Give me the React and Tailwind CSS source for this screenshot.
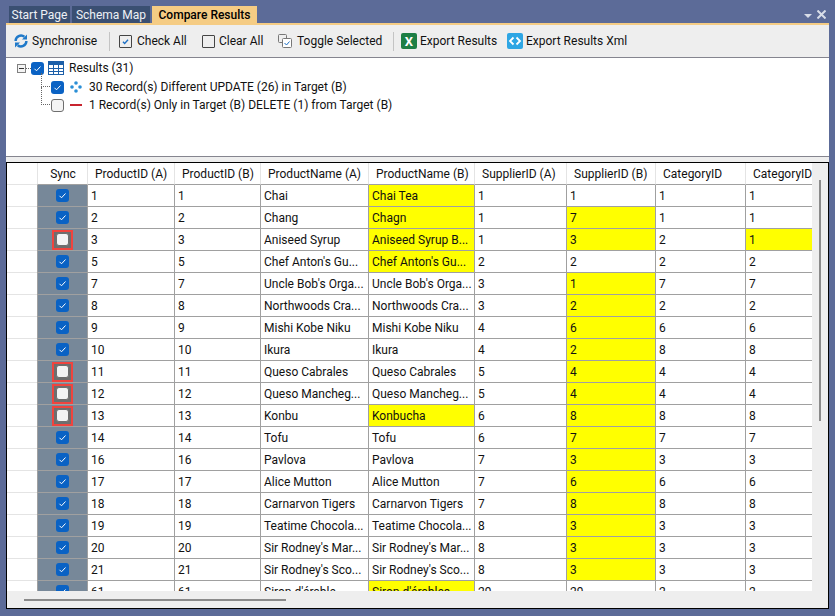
import React from 'react'

const columns = [
  { label: 'ProductID (A)', width: 'w-[87px]' },
  { label: 'ProductID (B)', width: 'w-[86px]' },
  { label: 'ProductName (A)', width: 'w-[108px]' },
  { label: 'ProductName (B)', width: 'w-[106px]' },
  { label: 'SupplierID (A)', width: 'w-[92px]' },
  { label: 'SupplierID (B)', width: 'w-[89px]' },
  { label: 'CategoryID', width: 'w-[90px]' },
  { label: 'CategoryID', width: 'w-[90px]' },
]

// each row: checked, values, indexes of the cells marked yellow
const rows = [
  [true, ['1', '1', 'Chai', 'Chai Tea', '1', '1', '1', '1'], [3]],
  [true, ['2', '2', 'Chang', 'Chagn', '1', '7', '1', '1'], [3, 5]],
  [false, ['3', '3', 'Aniseed Syrup', 'Aniseed Syrup B...', '1', '3', '2', '1'], [3, 5, 7]],
  [true, ['5', '5', "Chef Anton's Gu...", "Chef Anton's Gu...", '2', '2', '2', '2'], [3]],
  [true, ['7', '7', "Uncle Bob's Orga...", "Uncle Bob's Orga...", '3', '1', '7', '7'], [5]],
  [true, ['8', '8', 'Northwoods Cra...', 'Northwoods Cra...', '3', '2', '2', '2'], [5]],
  [true, ['9', '9', 'Mishi Kobe Niku', 'Mishi Kobe Niku', '4', '6', '6', '6'], [5]],
  [true, ['10', '10', 'Ikura', 'Ikura', '4', '2', '8', '8'], [5]],
  [false, ['11', '11', 'Queso Cabrales', 'Queso Cabrales', '5', '4', '4', '4'], [5]],
  [false, ['12', '12', 'Queso Mancheg...', 'Queso Mancheg...', '5', '4', '4', '4'], [5]],
  [false, ['13', '13', 'Konbu', 'Konbucha', '6', '8', '8', '8'], [3, 5]],
  [true, ['14', '14', 'Tofu', 'Tofu', '6', '7', '7', '7'], [5]],
  [true, ['16', '16', 'Pavlova', 'Pavlova', '7', '3', '3', '3'], [5]],
  [true, ['17', '17', 'Alice Mutton', 'Alice Mutton', '7', '6', '6', '6'], [5]],
  [true, ['18', '18', 'Carnarvon Tigers', 'Carnarvon Tigers', '7', '8', '8', '8'], [5]],
  [true, ['19', '19', 'Teatime Chocola...', 'Teatime Chocola...', '8', '3', '3', '3'], [5]],
  [true, ['20', '20', "Sir Rodney's Mar...", "Sir Rodney's Mar...", '8', '3', '3', '3'], [5]],
  [true, ['21', '21', "Sir Rodney's Sco...", "Sir Rodney's Sco...", '8', '3', '3', '3'], [5]],
  [true, ['61', '61', "Sirop d'érable", "Sirop d'érables", '29', '29', '2', '2'], [3]],
]

const Tick = ({ className, width = 1 }) => (
  <svg viewBox="0 0 13 13" className={className} fill="none" stroke="currentColor" strokeWidth={width}>
    <path d="M3.5 6.8 5.5 8.8 9.5 4.5" />
  </svg>
)

const BlueCheck = ({ checked }) =>
  checked ? (
    <span className="flex h-[13px] w-[13px] items-center justify-center rounded-[3px] bg-[#0a62c4] text-white">
      <Tick className="h-[13px] w-[13px]" />
    </span>
  ) : (
    <span className="block h-[13px] w-[13px] rounded-[3px] border border-[#6e6e6e] bg-[#f4f4f4]" />
  )

const ToolbarCheck = ({ checked }) => (
  <span className="flex h-[13px] w-[13px] items-center justify-center rounded-[1px] border border-[#444] text-[#1c6fc4]">
    {checked && <Tick className="h-[13px] w-[13px]" width={1.6} />}
  </span>
)

const SyncIcon = () => (
  <svg viewBox="0 0 14 14" className="h-[14px] w-[14px]" fill="none" stroke="#1f79c9" strokeWidth="2.4">
    <path d="M1.6 7a5.4 5.4 0 0 1 8.8-4.2" />
    <path d="M12.4 7a5.4 5.4 0 0 1-8.8 4.2" />
    <path d="M13 0.5v5H8z" fill="#1f79c9" strokeWidth="0" />
    <path d="M1 13.5v-5h5z" fill="#1f79c9" strokeWidth="0" />
  </svg>
)

const ToggleIcon = () => (
  <svg viewBox="0 0 14 14" className="h-[14px] w-[14px]" fill="none">
    <rect x="0.5" y="0.5" width="8" height="8" rx="1" fill="#eee" stroke="#777" />
    <rect x="4.5" y="4.5" width="9" height="9" rx="1" fill="#fff" stroke="#777" />
    <path d="M6.5 9 8.5 11l3-3.5" stroke="#1c6fc4" />
  </svg>
)

const ExcelIcon = () => (
  <span className="flex h-[16px] w-[16px] items-center justify-center rounded-[2px] bg-[#1d7f45] text-[13px] font-bold leading-none text-white">
    X
  </span>
)

const XmlIcon = () => (
  <span className="flex h-[16px] w-[16px] items-center justify-center rounded-[2px] bg-[#2ea6e4] text-white">
    <svg viewBox="0 0 16 16" className="h-[16px] w-[16px]" fill="none" stroke="currentColor" strokeWidth="1.8">
      <path d="M6.5 4.5 3 8l3.5 3.5" />
      <path d="M9.5 4.5 13 8l-3.5 3.5" />
    </svg>
  </span>
)

const TableIcon = () => (
  <svg viewBox="0 0 16 14" className="h-[14px] w-[16px]" fill="none">
    <rect x="0.5" y="0.5" width="15" height="13" fill="#fff" stroke="#1c5fa8" />
    <rect x="0.5" y="0.5" width="15" height="3.5" fill="#1c5fa8" />
    <path d="M0 7.5h16M0 10.5h16M5.5 4v10M10.5 4v10" stroke="#1c5fa8" />
  </svg>
)

const DiffIcon = () => (
  <svg viewBox="0 0 12 12" className="h-[12px] w-[12px]" fill="#2a8fd6">
    <circle cx="6" cy="2" r="1.8" />
    <circle cx="2" cy="6" r="1.8" />
    <circle cx="10" cy="6" r="1.8" />
    <circle cx="6" cy="10" r="1.8" />
  </svg>
)

const ToolButton = ({ icon, label, gap = 'gap-[4px]', className = '' }) => (
  <div className={`flex items-center ${gap} ${className}`}>
    {icon}
    <span>{label}</span>
  </div>
)

const App = () => {
  return (
    <div className="flex h-[616px] w-[835px] flex-col overflow-hidden bg-[#5c6b98] pl-[6px] pr-[6px] pt-[6px] pb-[7px] font-['Roboto',sans-serif] text-[12px] leading-[16px] text-[#111]">
      {/* Tabs */}
      <div className="flex h-[17px] items-stretch pl-[3px]">
        <div className="flex w-[61px] items-center justify-center bg-[#3a4f72] text-[#eef1f6]">Start Page</div>
        <div className="ml-[2px] flex w-[78px] items-center justify-center bg-[#3a4f72] text-[#eef1f6]">Schema Map</div>
        <div className="ml-[2px] flex w-[105px] items-center justify-center bg-[#f5cc84] font-medium text-black">Compare Results</div>
        <div className="ml-auto flex items-center gap-[5px] pr-[3px] text-[#d8dde8]">
          <span className="mt-[3px] h-0 w-0 border-x-[4px] border-t-[4px] border-x-transparent border-t-[#d8dde8]" />
          <svg viewBox="0 0 9 9" className="h-[9px] w-[9px]" stroke="currentColor" strokeWidth="2">
            <path d="M0.5 0.5 8.5 8.5M8.5 0.5 0.5 8.5" />
          </svg>
        </div>
      </div>
      <div className="h-[2px] bg-[#f5cc84]" />

      {/* Toolbar */}
      <div className="flex h-[33px] items-center border-b border-[#85858f] bg-[#eeeeee] pl-[8px]">
        <ToolButton icon={<SyncIcon />} label="Synchronise" className="w-[95px]" />
        <span className="h-[19px] w-px bg-[#c4c4c4]" />
        <ToolButton icon={<ToolbarCheck checked />} label="Check All" gap="gap-[5px]" className="ml-[9px] w-[83px]" />
        <ToolButton icon={<ToolbarCheck />} label="Clear All" className="w-[76px]" />
        <ToolButton icon={<ToggleIcon />} label="Toggle Selected" gap="gap-[5px]" className="w-[115px]" />
        <span className="h-[19px] w-px bg-[#c4c4c4]" />
        <ToolButton icon={<ExcelIcon />} label="Export Results" gap="gap-[3px]" className="ml-[7px] w-[106px]" />
        <ToolButton icon={<XmlIcon />} label="Export Results Xml" gap="gap-[3px]" />
      </div>

      {/* Results tree */}
      <div className="h-[98px] bg-white pl-[11px] pt-[1px]">
        <div className="flex h-[18px] items-center">
          <span className="flex h-[9px] w-[9px] items-center justify-center border border-[#808080] bg-[#f4f4f4]">
            <span className="h-px w-[5px] bg-[#333]" />
          </span>
          <span className="w-[5px] border-t border-dotted border-[#666]" />
          <BlueCheck checked />
          <span className="ml-[4px]"><TableIcon /></span>
          <span className="ml-[5px]">Results (31)</span>
        </div>
        <div className="relative ml-[34px] mt-[1px] flex h-[18px] items-center">
          <span className="absolute left-[-10px] top-[-5px] h-[14px] w-[9px] border-b border-l border-dotted border-[#666]" />
          <BlueCheck checked />
          <span className="ml-[6px]"><DiffIcon /></span>
          <span className="ml-[7px]">30 Record(s) Different UPDATE (26) in Target (B)</span>
        </div>
        <div className="relative ml-[34px] flex h-[18px] items-center">
          <span className="absolute left-[-10px] top-[-9px] h-[18px] w-[9px] border-b border-l border-dotted border-[#666]" />
          <BlueCheck />
          <span className="ml-[6px] h-[2px] w-[12px] bg-[#c8242f]" />
          <span className="ml-[7px]">1 Record(s) Only in Target (B) DELETE (1) from Target (B)</span>
        </div>
      </div>

      <div className="h-[6px] border-t border-[#85858f] bg-[#eeeeee]" />

      {/* Grid */}
      <div className="flex min-h-0 flex-1 flex-col border border-black bg-[#eeeeee]">
        <div className="flex min-h-0 flex-1">
          <div className="w-[805px] overflow-hidden bg-white">
            <div className="flex h-[22px]">
              <div className="w-[30px] shrink-0 border-b border-[#e4e4e4]" />
              <div className="flex w-[50px] shrink-0 items-center justify-center border-b border-l border-b-[#a0a0a0] border-l-[#e4e4e4] pl-[1px]">Sync</div>
              {columns.map((col, i) => (
                <div key={i} className={`${col.width} flex shrink-0 items-center overflow-hidden whitespace-nowrap border-b border-l border-b-[#a0a0a0] border-l-[#e4e4e4] pl-[7px]`}>
                  {col.label}
                </div>
              ))}
            </div>
            {rows.map(([checked, values, marked], r) => (
              <div key={r} className="flex h-[22px]">
                <div className="w-[30px] shrink-0 border-b border-[#e4e4e4]" />
                <div className="flex w-[50px] shrink-0 items-center justify-center border-b border-l border-[#a0a0a0] bg-[#778899]">
                  {checked ? (
                    <BlueCheck checked />
                  ) : (
                    <span className="flex h-[20px] w-[21px] items-center justify-center border-[2px] border-[#f0443e] bg-[#6e6e6e]">
                      <BlueCheck />
                    </span>
                  )}
                </div>
                {values.map((v, i) => (
                  <div
                    key={i}
                    className={`${columns[i].width} flex shrink-0 items-center overflow-hidden whitespace-nowrap border-b border-l border-[#a0a0a0] pl-[3px] ${marked.includes(i) ? 'bg-[#ffff00]' : 'bg-white'}`}
                  >
                    {v}
                  </div>
                ))}
              </div>
            ))}
          </div>
          {/* Vertical scrollbar */}
          <div className="flex flex-1 justify-center pt-[17px]">
            <div className="h-[241px] w-[2px] bg-[#8a8a8a]" />
          </div>
        </div>
        {/* Horizontal scrollbar */}
        <div className="flex h-[17px] items-center pl-[17px]">
          <div className="h-[2px] w-[262px] bg-[#8a8a8a]" />
        </div>
      </div>
    </div>
  )
}

export default App
